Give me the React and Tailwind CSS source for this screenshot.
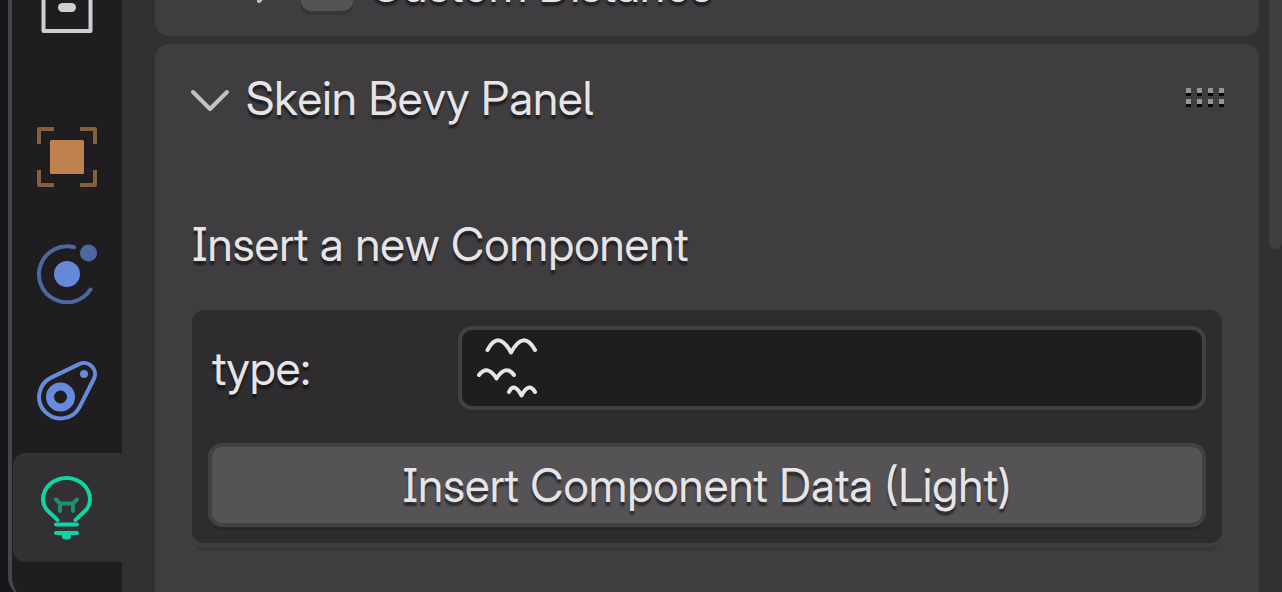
import React, { useState } from 'react';

const CollectionIcon = () => (
  <svg width="60" height="60" viewBox="0 0 60 60" fill="none" stroke="#d0ced1" strokeWidth="4" strokeLinejoin="round">
    <rect x="2.5" y="4" width="55" height="14" />
    <path d="M6.5 18V58H53.5V18" />
    <rect x="21" y="30" width="18" height="9" rx="4.5" fill="#d0ced1" stroke="none" />
  </svg>
);

const ObjectIcon = () => (
  <svg width="60" height="60" viewBox="0 0 60 60" fill="none" stroke="#85603f" strokeWidth="4">
    <path d="M2 17V2H17M43 2H58V17M58 43V58H43M17 58H2V43" strokeLinejoin="round" />
    <rect x="13" y="13" width="34" height="34" rx="1.5" fill="#c0814f" stroke="none" />
  </svg>
);

const PhysicsIcon = () => (
  <svg width="60" height="60" viewBox="0 0 60 60" fill="none">
    <path d="M37 3.2A28 28 0 1 0 53.5 45.5" stroke="#4d67a0" strokeWidth="4" strokeLinecap="round" />
    <circle cx="30" cy="30" r="13" fill="#6688d8" />
    <circle cx="51.5" cy="9" r="8.5" fill="#4d67a0" />
  </svg>
);

const ConstraintIcon = () => (
  <svg width="60" height="60" viewBox="0 0 60 60" fill="none" stroke="#658bda">
    <path
      d="M14.1 16.6L42.2 3.1A11 11 0 0 1 56.8 18L42.7 45.8A21.5 21.5 0 1 1 14.1 16.6Z"
      strokeWidth="4"
    />
    <circle cx="23.5" cy="36" r="10.5" strokeWidth="8" />
    <circle cx="47" cy="13" r="4" fill="#658bda" stroke="none" />
  </svg>
);

const LightIcon = () => (
  <svg width="60" height="64" viewBox="0 0 60 64" fill="none" strokeWidth="4" strokeLinecap="round" strokeLinejoin="round">
    <path
      d="M20.5 44C14 37 6 33.5 6 23.5A23.5 21.5 0 0 1 53 23.5C53 33.5 45 37 38.5 44"
      stroke="#0bd6a4"
    />
    <path d="M19 48.5H40M19 57H40" stroke="#0bd6a4" />
    <path d="M25 57H34V60.5Q34 63.5 31 63.5H28Q25 63.5 25 60.5Z" fill="#0bd6a4" />
    <path d="M19 23.5L23 27.5H36L40 23.5M23 27.5V35M36 27.5V35" stroke="#1d8f74" />
  </svg>
);

// flock of birds, the Bevy component marker
const BirdsIcon = () => (
  <svg width="60" height="60" viewBox="0 0 60 60" fill="none" stroke="#e6e4e7" strokeWidth="4" strokeLinecap="round" strokeLinejoin="round" className="shrink-0">
    <path d="M10.5 12Q21.5 -8.5 34 14.5Q46.5 -8.5 58 12" />
    <path d="M2 37Q10.5 26 19.5 40.5Q28.5 26 37 37" />
    <path d="M32 54Q37 43.5 44.5 57.5Q52 43.5 58 54" />
  </svg>
);

const ChevronDown = () => (
  <svg width="40" height="28" viewBox="0 0 40 28" fill="none" stroke="#c3c1c4" strokeWidth="4" strokeLinecap="round" strokeLinejoin="round">
    <path d="M3 8L20 25L37 8" />
  </svg>
);

const ChevronRight = () => (
  <svg width="24" height="40" viewBox="0 0 24 40" fill="none" stroke="#c3c1c4" strokeWidth="4" strokeLinecap="round" strokeLinejoin="round">
    <path d="M3 2L20 19L3 36" />
  </svg>
);

const GripDots = () => (
  <div className="grid grid-cols-4 gap-x-[6px] gap-y-[3px]">
    {[...Array(8)].map((_, i) => (
      <span key={i} className="h-2 w-[5px] border-b-[3px] border-black bg-[#969497]" />
    ))}
  </div>
);

const tabs = [
  { id: 'object', label: 'Object', icon: <ObjectIcon /> },
  { id: 'physics', label: 'Physics', icon: <PhysicsIcon /> },
  { id: 'constraints', label: 'Object Constraints', icon: <ConstraintIcon /> },
  { id: 'data', label: 'Data', icon: <LightIcon /> },
];

const Tab = ({ label, icon, active, onClick }) => (
  <button
    type="button"
    aria-label={label}
    onClick={onClick}
    className={`flex h-[109px] w-full shrink-0 items-center justify-center rounded-l-xl pr-px ${active ? 'bg-[#323033]' : ''}`}
  >
    {icon}
  </button>
);

const App = () => {
  const [activeTab, setActiveTab] = useState('data');
  const [type, setType] = useState('');
  const [customDistance, setCustomDistance] = useState(false);

  return (
    <div className="h-screen overflow-hidden bg-[#18161a] pl-2 font-['Inter_Display','Inter',sans-serif] text-[46px] leading-[56px] text-[#e6e4e7] [font-feature-settings:'cv05','cv08'] [font-kerning:none] [font-variation-settings:'opsz'_32] [text-shadow:0_4px_2px_rgba(0,0,0,0.5)]">
      <div className="flex h-[calc(100%+8px)] overflow-hidden rounded-bl-3xl border-l-4 border-[#48464a] bg-[#323033]">
        <nav className="w-[110px] shrink-0 bg-[#1f1d20] pl-px">
          <div className="-mt-[52px] flex flex-col gap-2">
            <Tab label="Collection" icon={<CollectionIcon />} onClick={() => setActiveTab('collection')} />
            <hr className="mb-[25px] ml-5 h-1 border-0 bg-[#1c1a1d]" />
            {tabs.map((tab) => (
              <Tab
                key={tab.id}
                label={tab.label}
                icon={tab.icon}
                active={activeTab === tab.id}
                onClick={() => setActiveTab(tab.id)}
              />
            ))}
          </div>
        </nav>

        <main className="-mt-[66px] flex flex-1 flex-col gap-2 pr-[10px] pl-[33px]">
          <section className="flex h-[102px] shrink-0 items-center rounded-[14px] bg-[#3f3d40] pl-[101px]">
            <ChevronRight />
            <label className="flex items-center gap-4 pl-[21px]">
              <input
                type="checkbox"
                checked={customDistance}
                onChange={(e) => setCustomDistance(e.target.checked)}
                className="size-[52px] appearance-none rounded-[10px] bg-[#555356] shadow-[0_4px_0_#373538] checked:bg-[#4772b3]"
              />
              Custom Distance
            </label>
          </section>

          <section className="flex-1 rounded-t-[14px] bg-[#3f3d40] px-[37px]">
            <header className="flex h-[107px] items-center justify-between">
              <h2 className="-ml-[2px] flex items-center gap-4">
                <ChevronDown />
                Skein Bevy Panel
              </h2>
              <div className="-mr-[2px]">
                <GripDots />
              </div>
            </header>

            <p className="pt-[65px] pb-[38px]">Insert a new Component</p>

            <form
              onSubmit={(e) => e.preventDefault()}
              className="flex flex-col gap-[33px] rounded-xl bg-[#2e2c2f] p-4 shadow-[0_4px_0_#3f3d40,0_12px_0_-4px_#373538]"
            >
              <div className="flex items-center">
                <label htmlFor="type" className="w-1/4 pl-1">type:</label>
                <div className="flex h-[84px] flex-1 items-center gap-3 rounded-[14px] border-4 border-[#414043] bg-[#1f1d20] px-[15px] shadow-[0_4px_0_-1px_#2a282b]">
                  <BirdsIcon />
                  <input
                    id="type"
                    type="text"
                    value={type}
                    onChange={(e) => setType(e.target.value)}
                    className="w-full min-w-0 bg-transparent outline-none"
                  />
                </div>
              </div>
              <button
                type="submit"
                className="h-[84px] rounded-[14px] border-4 border-[#414043] bg-[#555356] shadow-[0_4px_0_-1px_#29272a] [font-kerning:inherit] [text-shadow:inherit]"
              >
                Insert Component Data (Light)
              </button>
            </form>
          </section>
        </main>

        <div className="h-[249px] w-[13px] shrink-0 rounded-b-md bg-[#3f3d40]" />
      </div>
    </div>
  );
};

export default App;
